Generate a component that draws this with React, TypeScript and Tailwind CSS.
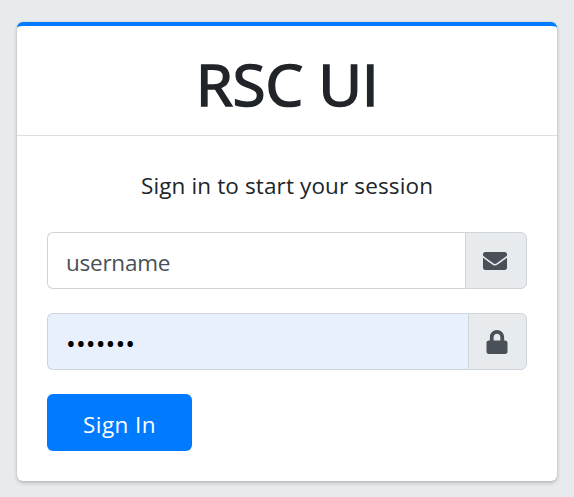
import React from "react";
import { FaEnvelope, FaLock } from "react-icons/fa";

export default function App() {
  return (
    <div className="h-[497px] w-[574px] overflow-hidden bg-[#e8ebee] pl-[17px] pt-[22px] font-['Open_Sans','Noto_Sans',sans-serif] text-[#212529]">
      <main className="h-[459px] w-[540px] rounded-[6px] border-t-4 border-[#007bff] bg-white shadow-[0_0_2px_rgba(0,0,0,0.13),0_2px_4px_rgba(0,0,0,0.2)]">
        <header className="flex h-[110px] items-center justify-center border-b border-[#dfdfdf] pt-[7px]">
          <h1 className="origin-center scale-x-[1.045] whitespace-nowrap text-[57px] font-medium leading-[72px] [-webkit-text-stroke:1.7px_#212529]">RSC UI</h1>
        </header>
        <form className="px-[30px] pt-[32px]" onSubmit={(e) => e.preventDefault()}>
          <p className="h-[36px] text-center text-[22.5px] leading-[36px] tracking-[0.13px]">Sign in to start your session</p>
          <div className="mt-[28px] flex h-[57px]">
            <input className="min-w-0 flex-1 rounded-l-[6px] border border-r-0 border-[#ced4da] px-[18px] pt-[5px] text-[22.5px] tracking-[-0.25px] text-[#495057] outline-none" defaultValue="username" />
            <span className="flex w-[62px] items-center justify-center rounded-r-[6px] border border-[#ced4da] bg-[#e8ebee] pr-[2px] text-[#495057]"><FaEnvelope size={24} /></span>
          </div>
          <div className="mt-[24px] flex h-[57px]">
            <input type="password" className="min-w-0 flex-1 rounded-l-[6px] border border-r-0 border-[#ced4da] bg-[#e8f0fe] px-[18px] pt-[3px] text-[26px] tracking-[0.1px] text-black outline-none" defaultValue="passwrd" />
            <span className="flex w-[59px] items-center justify-center rounded-r-[6px] border border-[#ced4da] bg-[#e8ebee] pr-[2px] text-[#495057]"><FaLock size={24} /></span>
          </div>
          <button className="mt-[24px] h-[57px] w-[145px] rounded-[6px] bg-[#007bff] pt-[5px] text-[22.5px] tracking-[0.4px] text-white">Sign In</button>
        </form>
      </main>
    </div>
  );
}
